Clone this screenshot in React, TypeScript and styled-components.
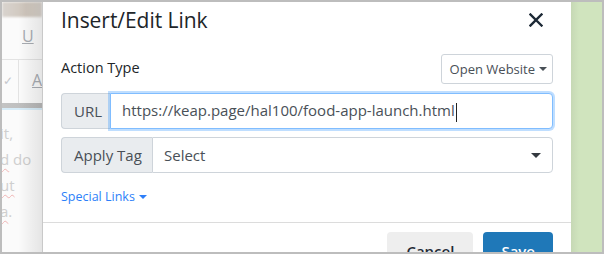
import React from "react";
import styled, { createGlobalStyle } from "styled-components";

const Global = createGlobalStyle`
  html, body { margin: 0; padding: 0; background: #fff; }
  * { box-sizing: border-box; }
`;

const Frame = styled.div`
  width: 604px;
  height: 254px;
  border: 2px solid #bdbdbd;
  display: grid;
  grid-template-columns: 40px 1fr 31px;
  overflow: hidden;
  font-family: "Open Sans", "Noto Sans", sans-serif;
`;

/* ---------- faded editor behind the dialog ---------- */
const Backdrop = styled.div`
  position: relative;
  background: #fbfbfb;
  overflow: hidden;
  display: flex;
  flex-direction: column;
  &::after {
    content: "";
    position: absolute;
    inset: 0;
    background: linear-gradient(to right, rgba(0,0,0,0) 40%, rgba(0,0,0,0.09) 100%);
    pointer-events: none;
  }
`;

const PhotoBand = styled.div`
  height: 15px;
  background: linear-gradient(to right, #d9d4cf, #cfc6bc 60%, #d8d2cc);
  filter: blur(1px);
`;

const ToolRow = styled.div<{ $h: number; $bordered?: boolean }>`
  height: ${(p) => p.$h}px;
  position: relative;
  border-bottom: ${(p) => (p.$bordered ? "1px solid #e3e3e3" : "none")};
  display: flex;
  align-items: center;
`;

const ToolGlyph = styled.span<{ $left: number; $top: number; $size: number }>`
  position: absolute;
  left: ${(p) => p.$left}px;
  top: ${(p) => p.$top}px;
  font-size: ${(p) => p.$size}px;
  color: #a9adb3;
  line-height: 1;
  text-decoration: underline;
`;

const ToolCheck = styled.span`
  position: absolute;
  left: 1px;
  top: 15px;
  font-size: 12px;
  color: #c4c7cb;
  line-height: 1;
`;

const ToolDivider = styled.div`
  position: absolute;
  left: 16px;
  top: 0;
  bottom: 0;
  border-left: 1px solid #e3e3e3;
`;

const GreyBar = styled.div`
  height: 5px;
  background: linear-gradient(to right, #c4c4c4, #b9b9b9);
`;

const BlueLine = styled.div`
  height: 2px;
  background: #d7ecf8;
`;

const FadedText = styled.div`
  padding: 13px 0 0 0;
  display: flex;
  flex-direction: column;
  gap: 5px;
  margin-left: -2px;
`;

const FadedLine = styled.div`
  font-size: 15px;
  line-height: 21px;
  color: #cfcfcf;
  white-space: nowrap;
`;

const Squiggle = styled.span`
  text-decoration: underline wavy #f0b4b4;
  text-decoration-thickness: 1px;
  text-underline-offset: 3px;
`;

/* ---------- dialog ---------- */
const Modal = styled.div`
  background: #fff;
  border-left: 1px solid #c9c9c9;
  display: flex;
  flex-direction: column;
`;

const Header = styled.div`
  display: flex;
  align-items: center;
  justify-content: space-between;
  padding: 0 28px 0 18px;
  height: 36px;
`;

const Title = styled.h5`
  margin: 0;
  font-size: 21px;
  font-weight: 400;
  color: #212529;
  letter-spacing: -0.05px;
`;

const CloseBtn = styled.button`
  border: 0;
  background: none;
  padding: 0;
  width: 14px;
  height: 14px;
  display: flex;
  color: #1d2936;
`;

const Body = styled.div`
  padding: 16px 18px 0 18px;
  display: flex;
  flex-direction: column;
`;

const ActionRow = styled.div`
  display: flex;
  align-items: center;
  justify-content: space-between;
  height: 30px;
`;

const Label = styled.span`
  font-size: 14.5px;
  color: #212529;
  margin-top: -4px;
`;

const Caret = styled.span<{ $w: number; $c: string }>`
  display: inline-block;
  width: 0;
  height: 0;
  border-left: ${(p) => p.$w / 2}px solid transparent;
  border-right: ${(p) => p.$w / 2}px solid transparent;
  border-top: ${(p) => p.$w / 2}px solid ${(p) => p.$c};
`;

const SmallButton = styled.button`
  height: 30px;
  padding: 0 5px 0 8px;
  border: 1px solid #ced4da;
  border-radius: 3px;
  background: #fff;
  font-family: inherit;
  font-size: 13px;
  color: #495057;
  display: flex;
  align-items: center;
  gap: 4px;
`;

const Group = styled.div<{ $mt: number }>`
  display: flex;
  height: 36px;
  margin-top: ${(p) => p.$mt}px;
`;

const Addon = styled.div<{ $w: number }>`
  width: ${(p) => p.$w}px;
  flex: none;
  background: #e9ecef;
  border: 1px solid #ced4da;
  border-right: 0;
  border-radius: 4px 0 0 4px;
  display: flex;
  align-items: center;
  padding-left: 12px;
  font-size: 15px;
  color: #495057;
`;

const Field = styled.div<{ $focus?: boolean }>`
  flex: 1;
  display: flex;
  align-items: center;
  justify-content: space-between;
  padding: 0 11px 0 11px;
  border: 1px solid ${(p) => (p.$focus ? "#80bdff" : "#ced4da")};
  border-radius: 0 4px 4px 0;
  box-shadow: ${(p) => (p.$focus ? "0 0 0 2px rgba(0,123,255,0.25)" : "none")};
  font-size: 15px;
  color: #495057;
  background: #fff;
  white-space: nowrap;
`;

const Cursor = styled.span`
  display: inline-block;
  width: 1px;
  height: 19px;
  background: #222;
  vertical-align: middle;
  margin-left: 1px;
`;

const SpecialLink = styled.a`
  margin-top: 15px;
  font-size: 12.5px;
  color: #2d7ff9;
  display: flex;
  align-items: center;
  gap: 4px;
  text-decoration: none;
`;

const Footer = styled.div`
  margin-top: auto;
  border-top: 1px solid #dcdcdc;
  display: flex;
  justify-content: flex-end;
  gap: 10px;
  padding: 9px 18px 0 0;
  height: 30px;
  overflow: hidden;
`;

const FooterButton = styled.button<{ $primary?: boolean }>`
  height: 40px;
  padding: 9px ${(p) => (p.$primary ? 18 : 19)}px 0;
  border: 0;
  border-radius: 4px;
  font-family: inherit;
  font-size: 15px;
  font-weight: 600;
  background: ${(p) => (p.$primary ? "#1f78b8" : "#eeeeee")};
  color: ${(p) => (p.$primary ? "#fff" : "#1f2a36")};
  display: flex;
  align-items: flex-start;
`;

const GreenSide = styled.div`
  background: linear-gradient(to right, #c6d8b5 0px, #d0e4be 8px, #d0e4be);
`;

export default function App() {
  return (
    <>
      <Global />
      <Frame>
        <Backdrop>
          <PhotoBand />
          <ToolRow $h={43} $bordered>
            <ToolGlyph $left={20} $top={11} $size={16}>U</ToolGlyph>
          </ToolRow>
          <ToolRow $h={43}>
            <ToolDivider />
            <ToolCheck>✓</ToolCheck>
            <ToolGlyph $left={30} $top={12} $size={16}>A</ToolGlyph>
          </ToolRow>
          <GreyBar />
          <BlueLine />
          <FadedText>
            <FadedLine>it,</FadedLine>
            <FadedLine><Squiggle>d</Squiggle> do</FadedLine>
            <FadedLine><Squiggle>ut</Squiggle></FadedLine>
            <FadedLine><Squiggle>a</Squiggle>.</FadedLine>
          </FadedText>
        </Backdrop>

        <Modal>
          <Header>
            <Title>Insert/Edit Link</Title>
            <CloseBtn aria-label="Close">
              <svg width="14" height="14" viewBox="0 0 14 14">
                <path d="M1.5 1.5 L12.5 12.5 M12.5 1.5 L1.5 12.5" stroke="currentColor" strokeWidth="2.4" strokeLinecap="square" />
              </svg>
            </CloseBtn>
          </Header>
          <Body>
            <ActionRow>
              <Label>Action Type</Label>
              <SmallButton>
                Open Website <Caret $w={8} $c="#495057" />
              </SmallButton>
            </ActionRow>
            <Group $mt={9}>
              <Addon $w={49}>URL</Addon>
              <Field $focus>
                <span>
                  https://keap.page/hal100/food-app-launch.html<Cursor />
                </span>
              </Field>
            </Group>
            <Group $mt={8}>
              <Addon $w={91}>Apply Tag</Addon>
              <Field>
                <span>Select</span>
                <Caret $w={10} $c="#343a40" />
              </Field>
            </Group>
            <SpecialLink href="#">
              Special Links <Caret $w={8} $c="#2d7ff9" />
            </SpecialLink>
          </Body>
          <Footer>
            <FooterButton>Cancel</FooterButton>
            <FooterButton $primary>Save</FooterButton>
          </Footer>
        </Modal>

        <GreenSide />
      </Frame>
    </>
  );
}
